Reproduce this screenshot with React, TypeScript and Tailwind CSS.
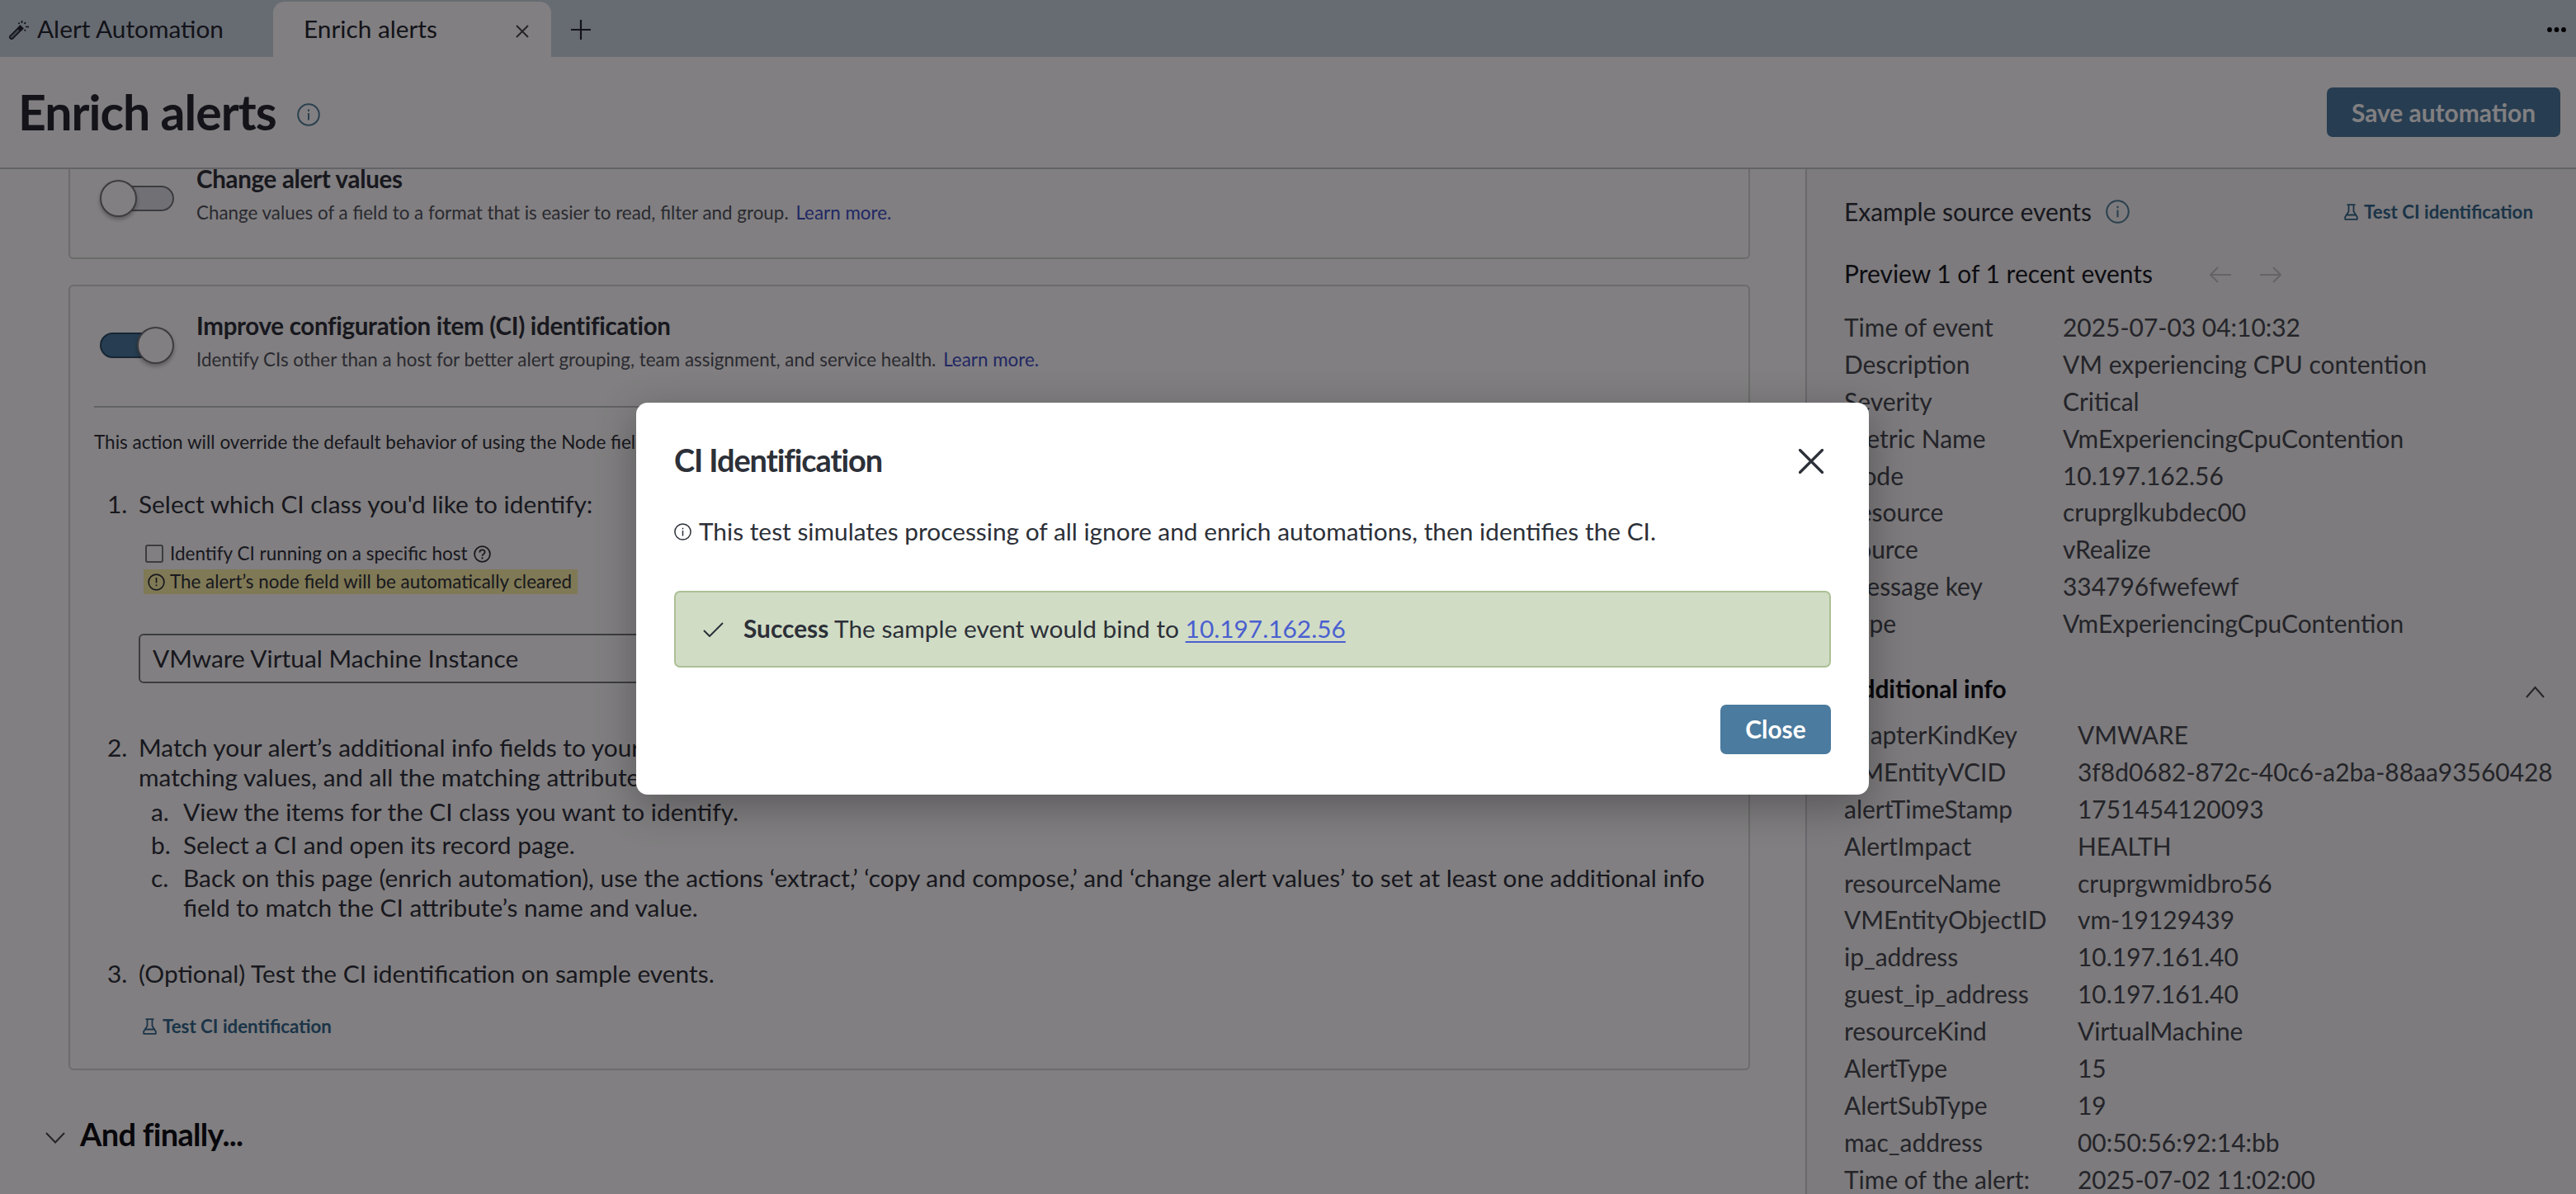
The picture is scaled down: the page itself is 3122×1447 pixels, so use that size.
import React from 'react';

type Row = [string, string];

const eventRows: Row[] = [
  ['Time of event', '2025-07-03 04:10:32'],
  ['Description', 'VM experiencing CPU contention'],
  ['Severity', 'Critical'],
  ['Metric Name', 'VmExperiencingCpuContention'],
  ['Node', '10.197.162.56'],
  ['Resource', 'cruprglkubdec00'],
  ['Source', 'vRealize'],
  ['Message key', '334796fwefewf'],
  ['Type', 'VmExperiencingCpuContention'],
];

const infoRows: Row[] = [
  ['adapterKindKey', 'VMWARE'],
  ['VMEntityVCID', '3f8d0682-872c-40c6-a2ba-88aa93560428'],
  ['alertTimeStamp', '1751454120093'],
  ['AlertImpact', 'HEALTH'],
  ['resourceName', 'cruprgwmidbro56'],
  ['VMEntityObjectID', 'vm-19129439'],
  ['ip_address', '10.197.161.40'],
  ['guest_ip_address', '10.197.161.40'],
  ['resourceKind', 'VirtualMachine'],
  ['AlertType', '15'],
  ['AlertSubType', '19'],
  ['mac_address', '00:50:56:92:14:bb'],
  ['Time of the alert:', '2025-07-02 11:02:00'],
];

const InfoIcon = ({ className }: { className: string }) => (
  <svg className={className} viewBox="0 0 28 28" fill="none" stroke="currentColor" strokeWidth="2">
    <circle cx="14" cy="14" r="12.8" />
    <path d="M14 12v8.5M14 7.5v2.4" />
  </svg>
);

const FlaskIcon = () => (
  <svg className="h-5 w-[17px]" viewBox="0 0 17 20" fill="none" stroke="currentColor" strokeWidth="1.8" strokeLinejoin="round">
    <path d="M3.500 1.200h10M5.500 1.200v8L1.200 16v2.800h14.600V16l-4.300-6.800v-8M3.500 13.500h10" />
  </svg>
);

const WandIcon = () => (
  <svg className="h-6 w-6" viewBox="0 0 24 24" fill="none" stroke="currentColor" strokeWidth="1.700">
    <path d="M1 20L13.500 7.500l3 3L4 23c-2 .8-4-1.200-3-3z" fill="currentColor" fillOpacity="0.450" />
    <path d="M13.500 7.500l3 3-3 2.500-2.500-2.500z" fill="currentColor" />
    <path d="M15.500 1v3M11.500 3.500l1 1.500M20 3l-1.500 2M20 8.500h4M18.500 12l1.500 1.500" />
  </svg>
);

const TestLink = () => (
  <button className="flex items-center gap-[7px] text-[22.3px] font-bold text-[#33688c]">
    <FlaskIcon />
    Test CI identification
  </button>
);

const Toggle = ({ on }: { on: boolean }) => (
  <div className={`mb-[3px] flex h-[46px] w-[90px] items-center ${on ? 'flex-row-reverse' : ''}`}>
    <div className="z-10 h-[45px] w-[45px] shrink-0 rounded-full border-2 border-[#75787c] bg-white shadow-[0_3px_5px_rgba(0,0,0,0.3)]" />
    {on ? (
      <div className="-mr-6 h-[31px] grow rounded-l-full border-2 border-[#2b4c66] bg-[#4a7b9f]" />
    ) : (
      <div className="-ml-6 h-[31px] grow rounded-r-full border-2 border-[#75787c] bg-[#dfe2e7]" />
    )}
  </div>
);

const OptionHeader = ({ on, title, text }: { on: boolean; title: string; text: string }) => (
  <div className="flex items-center">
    <Toggle on={on} />
    <div className="ml-[27px] flex flex-col">
      <h3 className="h-[22px] text-[29.5px] leading-[22px] font-bold tracking-[-0.3px] text-[#2c3038]">{title}</h3>
      <p className="mt-[10px] h-10 text-[22.4px] leading-10 text-[#50545c]">
        {text} <a className="ml-[3px] text-[#3e4fc4]">Learn more.</a>
      </p>
    </div>
  </div>
);

const TabBar = () => (
  <div className="flex h-[69px] items-end bg-[#cbd9e2] text-[29.8px] text-[#22262e]">
    <div className="flex h-[67px] w-[331px] items-center gap-[10px] pl-[11px]">
      <WandIcon />
      Alert Automation
    </div>
    <div className="flex h-[67px] w-[337px] items-center justify-between rounded-t-[14px] bg-white pr-[27px] pl-[37px]">
      Enrich alerts
      <svg className="mt-1 h-4 w-4" viewBox="0 0 16 16" stroke="#44484f" strokeWidth="2">
        <path d="M1 1l14 14M15 1L1 15" />
      </svg>
    </div>
    <div className="flex h-[67px] grow items-center justify-between pr-3 pl-6">
      <svg className="h-6 w-6" viewBox="0 0 24 24" stroke="currentColor" strokeWidth="2.2">
        <path d="M12 0v24M0 12h24" />
      </svg>
      <svg className="h-6 w-[23px]" viewBox="0 0 23 24" fill="#000">
        <circle cx="3" cy="12" r="2.9" />
        <circle cx="11.5" cy="12" r="2.9" />
        <circle cx="20" cy="12" r="2.9" />
      </svg>
    </div>
  </div>
);

const PageHeader = () => (
  <header className="flex h-[136px] items-center justify-between border-b-2 border-[#c3c6ca] pr-[19px] pl-[22px]">
    <div className="flex items-center">
      <h1 className="w-[338px] text-[59px] leading-[60px] font-bold tracking-[-1px] whitespace-nowrap text-[#22262e]">Enrich alerts</h1>
      <InfoIcon className="mt-[5px] h-7 w-7 text-[#51809a]" />
    </div>
    <button className="h-[60px] w-[283px] rounded-[7px] bg-[#4a7b9f] text-[29.9px] font-bold text-white">
      Save automation
    </button>
  </header>
);

const Steps = () => (
  <div className="text-[29.85px] leading-9 text-[#2c3038]">
    <div className="flex pt-[37px] pl-[16px]">
      <span className="w-[38px]">1.</span>
      <span>Select which CI class you'd like to identify:</span>
    </div>

    <div className="mt-[26px] flex h-8 items-center pl-[62px] text-[22.5px]">
      <div className="h-[22px] w-[22px] rounded-[3px] border-2 border-[#75787c]" />
      <span className="ml-[8px]">Identify CI running on a specific host</span>
      <svg className="ml-[7px] h-[21px] w-[21px]" viewBox="0 0 21 21" fill="none" stroke="currentColor" strokeWidth="1.8">
        <circle cx="10.5" cy="10.5" r="9.4" />
        <path d="M7.3 8.5c0-4 6.4-4 6.4-.4 0 2.4-3.2 2.3-3.2 4.6M10.5 14.2v2.2" />
      </svg>
    </div>
    <div className="mt-[3px] ml-[60px] flex h-[30px] w-[526px] items-center bg-[#fbf3a8] pl-[5px] text-[22.4px]">
      <svg className="h-[21px] w-[21px]" viewBox="0 0 21 21" fill="none" stroke="currentColor" strokeWidth="1.7">
        <circle cx="10.5" cy="10.5" r="9.4" />
        <path d="M10.5 5v6.500M10.5 13.500v1.800" />
      </svg>
      <span className="ml-[6px]">The alert’s node field will be automatically cleared</span>
    </div>

    <div className="mt-12 ml-[54px] flex h-[60px] w-[1100px] items-center rounded-[6px] border-2 border-[#75787c] pl-[15px]">
      VMware Virtual Machine Instance
    </div>

    <div className="mt-[60px] flex pl-[16px]">
      <span className="w-[38px]">2.</span>
      <span>
        Match your alert’s additional info fields to your CI’s attributes. Find the
        <br />
        matching values, and all the matching attributes will be used.
      </span>
    </div>
    <ol className="pl-[69px]">
      <li className="mt-[6px] flex">
        <span className="w-[39px]">a.</span>
        View the items for the CI class you want to identify.
      </li>
      <li className="mt-[4px] flex">
        <span className="w-[39px]">b.</span>
        Select a CI and open its record page.
      </li>
      <li className="mt-[4px] flex">
        <span className="w-[39px]">c.</span>
        <span className="whitespace-nowrap">
          Back on this page (enrich automation), use the actions ‘extract,’ ‘copy and compose,’ and ‘change alert values’ to set at least one additional info
          <br />
          field to match the CI attribute’s name and value.
        </span>
      </li>
    </ol>

    <div className="mt-[44px] flex pl-[16px]">
      <span className="w-[38px]">3.</span>
      <span>(Optional) Test the CI identification on sample events.</span>
    </div>
    <div className="mt-[28px] flex pl-[59px]">
      <TestLink />
    </div>
  </div>
);

const MainColumn = () => (
  <main className="flex w-[2188px] flex-col pl-[83px]">
    <section className="h-[109px] w-[2038px] rounded-b-[6px] border-2 border-t-0 border-[#d3d8d3] pt-px pl-[36px]">
      <OptionHeader on={false} title="Change alert values" text="Change values of a field to a format that is easier to read, filter and group." />
    </section>

    <section className="mt-[31px] h-[952px] w-[2038px] rounded-[6px] border-2 border-[#d3d8d3] px-[29px]">
      <div className="h-[147px] border-b-2 border-[#c0c4c4] pt-[37px] pl-[7px]">
        <OptionHeader
          on={true}
          title="Improve configuration item (CI) identification"
          text="Identify CIs other than a host for better alert grouping, team assignment, and service health."
        />
      </div>
      <p className="mt-[22px] h-10 text-[22.5px] leading-10 text-[#2c3038]">
        This action will override the default behavior of using the Node field to identify the CI.
      </p>
      <Steps />
    </section>

    <div className="mt-[54px] -ml-[28px] flex h-[46px] items-center">
      <svg className="mt-[10px] h-[14px] w-6" viewBox="0 0 24 14" fill="none" stroke="#44484f" strokeWidth="2">
        <path d="M1 1l11 11.500L23 1" />
      </svg>
      <h2 className="ml-[18px] text-[38px] font-bold tracking-[-0.7px] text-[#0c0e12]">And finally...</h2>
    </div>
  </main>
);

const RowList = ({ rows, labelClass }: { rows: Row[]; labelClass: string }) => (
  <dl className="text-[#44484f]">
    {rows.map(([label, value]) => (
      <div key={label} className="flex h-[44.9px] items-center whitespace-nowrap">
        <dt className={labelClass}>{label}</dt>
        <dd>{value}</dd>
      </div>
    ))}
  </dl>
);

const Sidebar = () => (
  <aside className="grow border-l-2 border-[#d0d0d4] bg-[#f6f6f6] pt-[31px] pl-[45px] text-[29.95px]">
    <div className="flex h-10 items-center pr-[52px] text-[#2c3038]">
      <span className="mt-px">Example source events</span>
      <InfoIcon className="ml-[17px] h-[29px] w-[29px] text-[#51809a]" />
      <div className="mt-px ml-auto">
        <TestLink />
      </div>
    </div>
    <div className="mt-[35px] flex h-10 items-center text-[#17191e]">
      <span className="w-[443px]">Preview 1 of 1 recent events</span>
      <svg className="mt-1 h-5 w-[87px]" viewBox="0 0 87 20" fill="none" stroke="#c6c6c9" strokeWidth="2">
        <path d="M26 10H1M10 1L1 10l9 9M61 10h25M77 1l9 9-9 9" />
      </svg>
    </div>
    <div className="mt-[23px]">
      <RowList rows={eventRows} labelClass="w-[265px]" />
    </div>
    <div className="mt-[36px] mb-[14px] flex h-10 items-center justify-between pr-[38px]">
      <h3 className="text-[29.9px] font-bold text-[#0c0e12]">Additional info</h3>
      <svg className="mt-2 h-[15px] w-[23px]" viewBox="0 0 23 15" fill="none" stroke="#44484f" strokeWidth="2">
        <path d="M1 14L11.500 2 22 14" />
      </svg>
    </div>
    <RowList rows={infoRows} labelClass="w-[283px]" />
  </aside>
);

const Modal = () => (
  <div className="h-[475px] w-[1494px] rounded-[14px] bg-white px-[46px] pt-[51px] text-[29.85px] text-[#2c3038] shadow-[0_14px_50px_rgba(0,0,0,0.3)]">
    <div className="flex h-10 items-center justify-between pr-[9px]">
      <h2 className="-mt-[3px] text-[38px] font-bold tracking-[-1.1px] whitespace-nowrap">CI Identification</h2>
      <svg className="h-[30px] w-[30px]" viewBox="0 0 30 30" stroke="currentColor" strokeWidth="3.2" strokeLinecap="round">
        <path d="M1.500 1.500l27 27M28.500 1.500l-27 27" />
      </svg>
    </div>
    <div className="mt-[45px] flex h-10 items-center">
      <InfoIcon className="h-[21px] w-[21px]" />
      <span className="ml-[9px]">This test simulates processing of all ignore and enrich automations, then identifies the CI.</span>
    </div>
    <div className="mt-[52px] flex h-[93px] items-center rounded-[7px] border-2 border-[#abc096] bg-[#d1dcc5] pl-[33px]">
      <svg className="h-[18px] w-[25px]" viewBox="0 0 25 18" fill="none" stroke="currentColor" strokeWidth="2">
        <path d="M1 10l7 7L24 1" />
      </svg>
      <p className="ml-6">
        <b>Success</b> The sample event would bind to{' '}
        <a className="text-[#4a5fd0] underline decoration-2 underline-offset-4">10.197.162.56</a>
      </p>
    </div>
    <div className="mt-[45px] flex justify-end">
      <button className="h-[60px] w-[134px] rounded-[7px] bg-[#4b7b9e] font-bold text-white">Close</button>
    </div>
  </div>
);

const App: React.FC = () => {
  return (
    <div className="relative h-[1447px] w-[3122px] overflow-hidden bg-white font-[Lato,'Noto_Sans',sans-serif]">
      <TabBar />
      <PageHeader />
      <div className="flex h-[1242px] overflow-hidden">
        <MainColumn />
        <Sidebar />
      </div>
      <div className="absolute inset-0 z-20 bg-[#030003]/50 pt-[488px] pl-[771px]">
        <Modal />
      </div>
    </div>
  );
};

export default App;
